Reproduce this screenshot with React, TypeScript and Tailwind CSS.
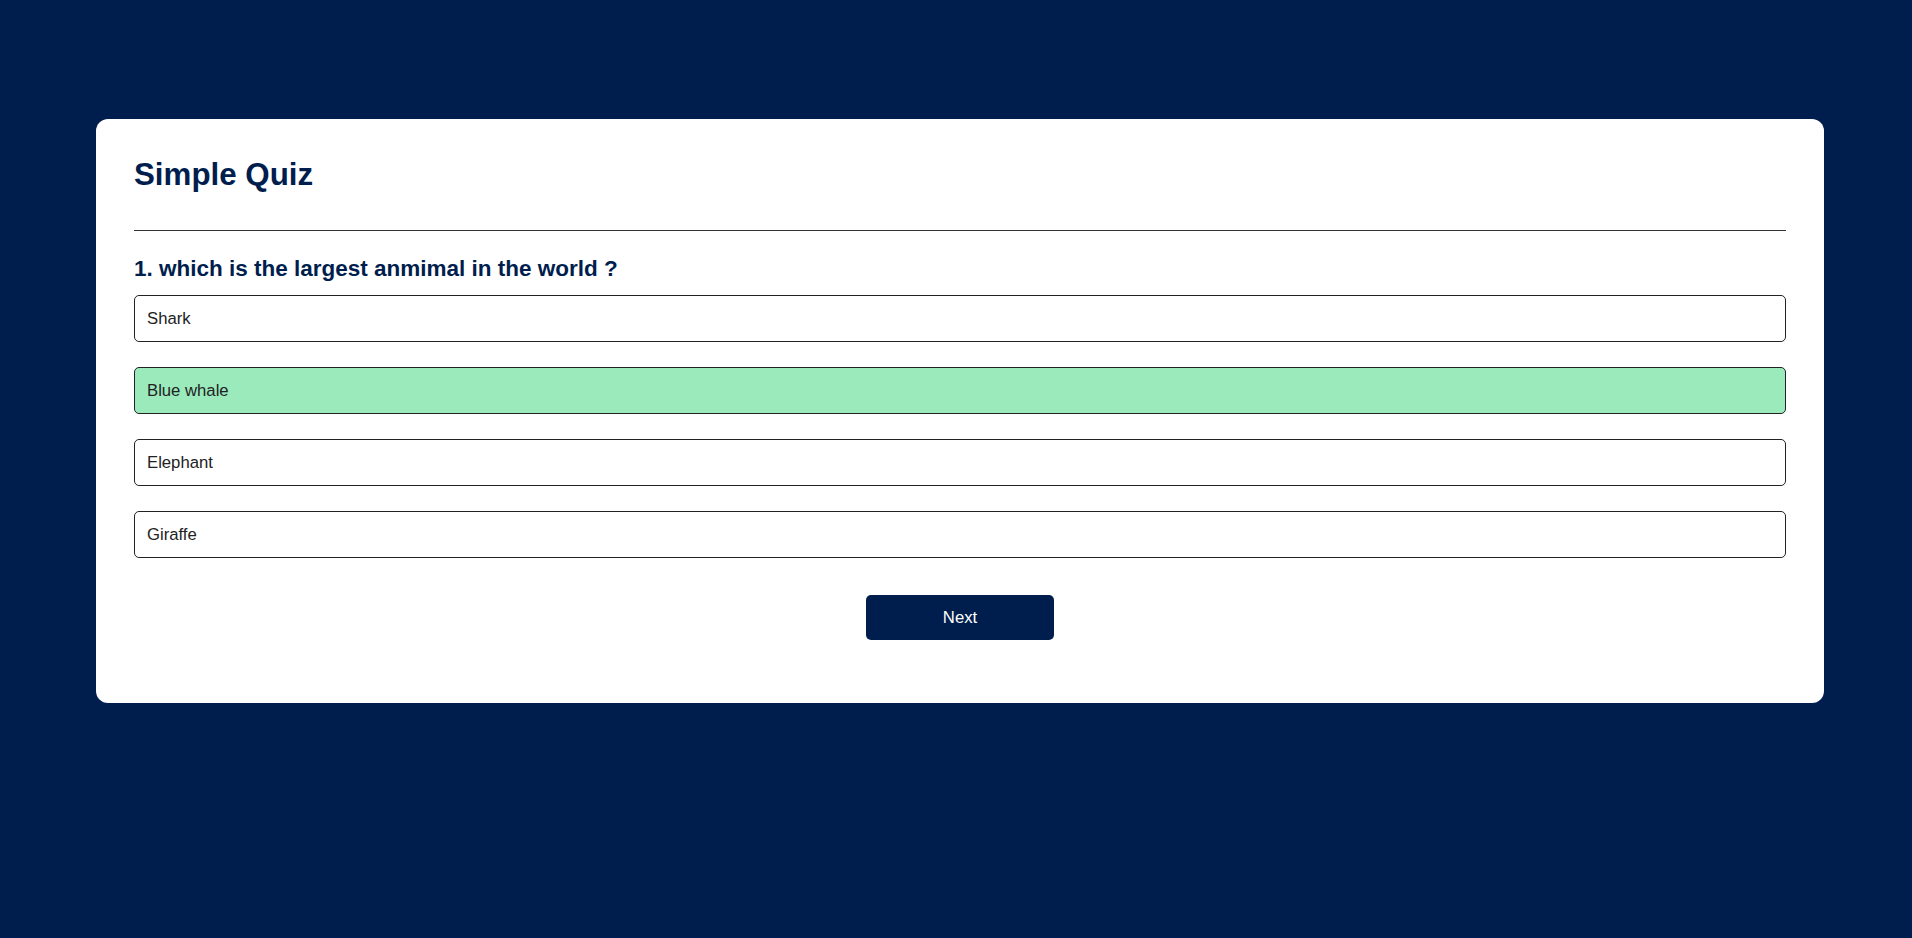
const answers = [
  { text: "Shark", correct: false },
  { text: "Blue whale", correct: true },
  { text: "Elephant", correct: false },
  { text: "Giraffe", correct: false },
];

export default function App() {
  return (
    <div className="min-h-screen w-full bg-[#001e4d] pt-[119px] font-['Liberation_Sans',Arial,sans-serif]">
      <div className="ml-[96px] w-[1728px] rounded-[12px] bg-white p-[38px]">
        <h1 className="border-b border-[#333] pb-[37px] text-[31.3px] font-bold leading-[36px] text-[#001e4d]">
          Simple Quiz
        </h1>
        <div className="py-[25px]">
          <h2 className="text-[22.5px] font-bold leading-[26px] text-[#001e4d]">
            1. which is the largest anmimal in the world ?
          </h2>
          <div className="mt-[13px] flex flex-col gap-[25px]">
            {answers.map((a) => (
              <button
                key={a.text}
                className={
                  "h-[47px] w-full rounded-[5px] border border-[#222] px-[12px] text-left text-[16.7px] text-[#222] " +
                  (a.correct ? "bg-[#9aeabc]" : "bg-white")
                }
              >
                {a.text}
              </button>
            ))}
          </div>
          <button className="mx-auto mt-[37px] block h-[45px] w-[188px] rounded-[5px] bg-[#001e4d] text-[16.7px] font-medium text-white">
            Next
          </button>
        </div>
      </div>
    </div>
  );
}
